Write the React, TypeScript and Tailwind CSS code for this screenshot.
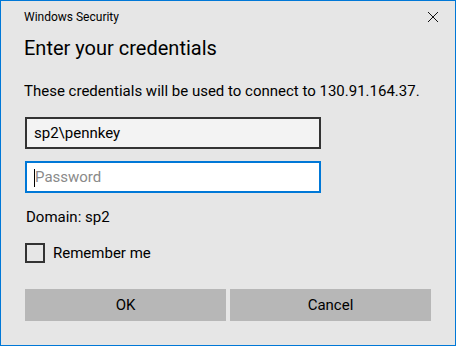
export default function App() {
  return (
    <div
      className="w-[456px] h-[346px] bg-[#e6e6e6] border border-[#0078d7] text-[#000] flex flex-col"
      style={{ fontFamily: '"Segoe UI", Roboto, sans-serif' }}
    >
      <div className="flex items-start justify-between pl-[23px] pr-[16px] pt-[8px] h-[32px]">
        <span className="text-[12px] leading-[16px] text-[#000]">Windows Security</span>
        <svg width="12" height="12" viewBox="0 0 12 12" className="mt-[2px]">
          <path d="M1 1 L11 11 M11 1 L1 11" stroke="#111" strokeWidth="1" fill="none" />
        </svg>
      </div>

      <div className="pl-[23px] pr-[16px]">
        <h1 className="text-[20px] leading-[26px] mt-[2px]">Enter your credentials</h1>
        <p className="text-[15px] leading-[20px] mt-[20px] whitespace-nowrap">
          These credentials will be used to connect to 130.91.164.37.
        </p>
      </div>

      <div className="pl-[24px] pr-[24px] flex flex-col">
        <div className="w-[296px] h-[32px] mt-[16px] border-2 border-[#333333] bg-[#f3f3f3] flex items-center px-[7px] text-[15px]">
          sp2\pennkey
        </div>
        <div className="w-[296px] h-[32px] mt-[12px] border-2 border-[#0078d7] bg-white flex items-center px-[8px] text-[15px] text-[#8a8a8a] relative">
          <span className="absolute left-[7px] top-[6px] w-px h-[18px] bg-black" />
          Password
        </div>
        <div className="text-[15px] leading-[20px] mt-[14px] pl-[1px]">Domain: sp2</div>
        <div className="flex items-center mt-[16px] gap-[8px]">
          <div className="w-[20px] h-[20px] border-2 border-[#333333]" />
          <span className="text-[15px] leading-[20px]">Remember me</span>
        </div>
        <div className="flex gap-[4px] mt-[26px]">
          <div className="w-[201px] h-[32px] bg-[#b7b7b7] flex items-center justify-center text-[15px]">OK</div>
          <div className="w-[201px] h-[32px] bg-[#b7b7b7] flex items-center justify-center text-[15px]">Cancel</div>
        </div>
      </div>
    </div>
  );
}
